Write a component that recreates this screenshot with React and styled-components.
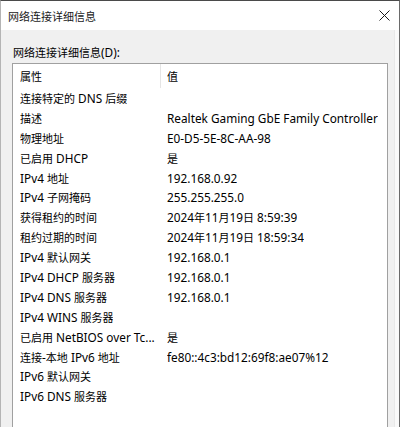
import React from "react";
import styled, { createGlobalStyle } from "styled-components";

const Global = createGlobalStyle`
  html, body { margin: 0; padding: 0; width: 400px; height: 427px; overflow: hidden; background: #f0f0f0; }
  * { box-sizing: border-box; }
`;

const FONT = `"Noto Sans", "Noto Sans CJK SC", sans-serif`;

const Window = styled.div`
  width: 400px;
  height: 427px;
  display: flex;
  flex-direction: column;
  border-top: 1px solid #4a4a4a;
  border-left: 1px solid #b4b4b4;
  border-right: 1px solid #6a6a6a;
  font-family: ${FONT};
  font-size: 11px;
  color: #000;
  overflow: hidden;
`;

const TitleBar = styled.div`
  height: 29px;
  flex: none;
  background: #fff;
  display: flex;
  align-items: center;
  justify-content: space-between;
  padding-left: 7px;
  padding-right: 9px;
`;

const Title = styled.div`
  color: #1a1a1a;
`;

const CloseBtn = styled.div`
  width: 12px;
  height: 12px;
  display: flex;
  align-items: center;
  justify-content: center;
`;

const Body = styled.div`
  flex: 1;
  display: flex;
  min-height: 0;
`;

const Content = styled.div`
  flex: 1;
  background: #f0f0f0;
  display: flex;
  flex-direction: column;
  padding: 14px 6px 0 11px;
  min-height: 0;
`;

const SideStrip = styled.div`
  width: 5px;
  background: #f9f9f9;
  border-left: 1px solid #e8e8e8;
`;

const Label = styled.div`
  height: 16px;
  line-height: 16px;
  margin-bottom: 3px;
  padding-left: 1px;
`;

const ListBox = styled.div`
  flex: 1;
  background: #fff;
  border: 1px solid #a0a0a0;
  border-bottom: none;
  min-height: 0;
  overflow: hidden;
`;

const Row = styled.div`
  display: grid;
  grid-template-columns: 148px 1fr;
  height: ${(p) => (p.$header ? 24 : 19.9)}px;
  align-items: center;
`;

const Cell = styled.div`
  min-width: 0;
  padding-left: ${(p) => (p.$value ? 6 : 7)}px;
  padding-right: ${(p) => (p.$value ? 0 : 2)}px;
  height: 100%;
  display: flex;
  align-items: center;
  border-right: ${(p) => (p.$divider ? "1px solid #e5e5e5" : "none")};
`;

const CellText = styled.span`
  overflow: hidden;
  white-space: nowrap;
`;

const Latin = styled.span`
  font-size: 11.8px;
`;

function Txt({ children }) {
  const s = String(children || "");
  const parts = s.split(/([\u3000-\u9fff\uff00-\uffef]+)/).filter(Boolean);
  return parts.map((p, i) =>
    /[\u3000-\u9fff\uff00-\uffef]/.test(p) ? <React.Fragment key={i}>{p}</React.Fragment> : <Latin key={i}>{p}</Latin>
  );
}

const rows = [
  ["连接特定的 DNS 后缀", ""],
  ["描述", "Realtek Gaming GbE Family Controller"],
  ["物理地址", "E0-D5-5E-8C-AA-98"],
  ["已启用 DHCP", "是"],
  ["IPv4 地址", "192.168.0.92"],
  ["IPv4 子网掩码", "255.255.255.0"],
  ["获得租约的时间", "2024年11月19日 8:59:39"],
  ["租约过期的时间", "2024年11月19日 18:59:34"],
  ["IPv4 默认网关", "192.168.0.1"],
  ["IPv4 DHCP 服务器", "192.168.0.1"],
  ["IPv4 DNS 服务器", "192.168.0.1"],
  ["IPv4 WINS 服务器", ""],
  ["已启用 NetBIOS over Tc...", "是"],
  ["连接-本地 IPv6 地址", "fe80::4c3:bd12:69f8:ae07%12"],
  ["IPv6 默认网关", ""],
  ["IPv6 DNS 服务器", ""],
];

export default function App() {
  return (
    <>
      <Global />
      <Window>
        <TitleBar>
          <Title>网络连接详细信息</Title>
          <CloseBtn>
            <svg width="11" height="11" viewBox="0 0 11 11">
              <path d="M0.5 0.5 L10.5 10.5 M10.5 0.5 L0.5 10.5" stroke="#1a1a1a" strokeWidth="1" fill="none" />
            </svg>
          </CloseBtn>
        </TitleBar>
        <Body>
          <Content>
            <Label><Txt>网络连接详细信息(D):</Txt></Label>
            <ListBox>
              <Row $header>
                <Cell $divider><CellText>属性</CellText></Cell>
                <Cell $value><CellText>值</CellText></Cell>
              </Row>
              {rows.map(([k, v]) => (
                <Row key={k}>
                  <Cell><CellText><Txt>{k}</Txt></CellText></Cell>
                  <Cell $value><CellText><Txt>{v}</Txt></CellText></Cell>
                </Row>
              ))}
            </ListBox>
          </Content>
          <SideStrip />
        </Body>
      </Window>
    </>
  );
}
